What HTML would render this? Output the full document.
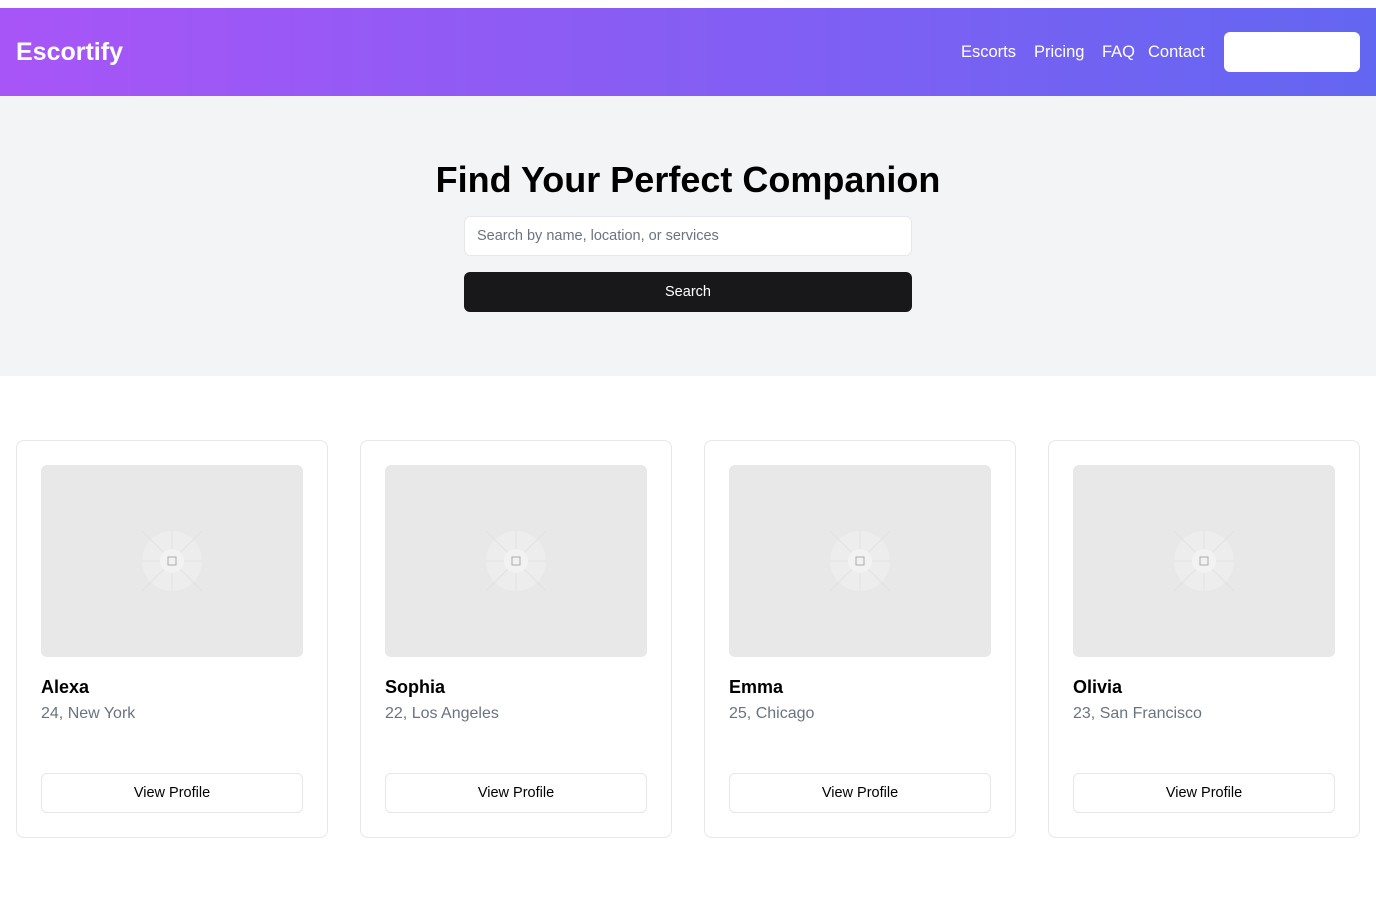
<!DOCTYPE html><html><head><style>
*{box-sizing:border-box;margin:0;padding:0}
body{width:1376px;height:910px;background:#fff;font-family:"Liberation Sans",sans-serif;position:relative;overflow:hidden}
.hdr{position:absolute;top:8px;left:0;width:1376px;height:88px;background:linear-gradient(90deg,#a855f7,#6366f1);}
.logo{position:absolute;left:16px;top:30px;color:#fff;font-weight:bold;font-size:25px}
.nav{position:absolute;top:35px;color:#fff;font-size:16.5px}
.nbtn{position:absolute;left:1224px;top:24px;width:136px;height:40px;background:#fff;border-radius:6px}
.hero{position:absolute;top:96px;left:0;width:1376px;height:280px;background:#f3f4f6}
h1{position:absolute;top:159px;width:100%;text-align:center;font-size:36px;font-weight:bold;color:#000}
.inp{position:absolute;left:464px;top:216px;width:448px;height:40px;background:#fff;border:1px solid #e5e7eb;border-radius:6px;font-size:14.5px;color:#6b7280;padding:11px 12px}
.sb{position:absolute;left:464px;top:272px;width:448px;height:40px;background:#18181b;border-radius:6px;color:#fff;font-size:14.5px;text-align:center;line-height:40px}
.card{position:absolute;top:440px;width:312px;height:398px;border:1px solid #e5e7eb;border-radius:8px;background:#fff}
.img{position:absolute;left:24px;top:24px;width:262px;height:192px;background:#e8e8e8;border-radius:6px}
.img svg{position:absolute;left:101px;top:66px}
.nm{position:absolute;left:24px;top:236px;font-weight:bold;font-size:18px;color:#000}
.loc{position:absolute;left:24px;top:264px;font-size:16px;color:#6b7280}
.vp{position:absolute;left:24px;top:332px;width:262px;height:40px;border:1px solid #e5e7eb;border-radius:6px;text-align:center;line-height:38px;font-size:14.5px;color:#000}
</style></head><body>
<div class="hdr"><div class="logo">Escortify</div>
<span class="nav" style="left:961px">Escorts</span><span class="nav" style="left:1034px">Pricing</span><span class="nav" style="left:1102px">FAQ</span><span class="nav" style="left:1148px">Contact</span>
<div class="nbtn"></div></div>
<div class="hero"></div>
<h1>Find Your Perfect Companion</h1>
<div class="inp">Search by name, location, or services</div>
<div class="sb">Search</div>
<div class="card" style="left:16px"><div class="img"><svg width="60" height="60"><circle cx="30" cy="30" r="30" fill="#ededed"/><g stroke="#e2e2e2"><line x1="30" y1="0" x2="30" y2="60"/><line x1="0" y1="30" x2="60" y2="30"/><line x1="0" y1="0" x2="60" y2="60"/><line x1="60" y1="0" x2="0" y2="60"/></g><circle cx="30" cy="30" r="12" fill="#f2f2f2"/><rect x="26" y="26" width="8" height="8" fill="none" stroke="#aaa"/></svg></div><div class="nm">Alexa</div><div class="loc">24, New York</div><div class="vp">View Profile</div></div>
<div class="card" style="left:360px"><div class="img"><svg width="60" height="60"><circle cx="30" cy="30" r="30" fill="#ededed"/><g stroke="#e2e2e2"><line x1="30" y1="0" x2="30" y2="60"/><line x1="0" y1="30" x2="60" y2="30"/><line x1="0" y1="0" x2="60" y2="60"/><line x1="60" y1="0" x2="0" y2="60"/></g><circle cx="30" cy="30" r="12" fill="#f2f2f2"/><rect x="26" y="26" width="8" height="8" fill="none" stroke="#aaa"/></svg></div><div class="nm">Sophia</div><div class="loc">22, Los Angeles</div><div class="vp">View Profile</div></div>
<div class="card" style="left:704px"><div class="img"><svg width="60" height="60"><circle cx="30" cy="30" r="30" fill="#ededed"/><g stroke="#e2e2e2"><line x1="30" y1="0" x2="30" y2="60"/><line x1="0" y1="30" x2="60" y2="30"/><line x1="0" y1="0" x2="60" y2="60"/><line x1="60" y1="0" x2="0" y2="60"/></g><circle cx="30" cy="30" r="12" fill="#f2f2f2"/><rect x="26" y="26" width="8" height="8" fill="none" stroke="#aaa"/></svg></div><div class="nm">Emma</div><div class="loc">25, Chicago</div><div class="vp">View Profile</div></div>
<div class="card" style="left:1048px"><div class="img"><svg width="60" height="60"><circle cx="30" cy="30" r="30" fill="#ededed"/><g stroke="#e2e2e2"><line x1="30" y1="0" x2="30" y2="60"/><line x1="0" y1="30" x2="60" y2="30"/><line x1="0" y1="0" x2="60" y2="60"/><line x1="60" y1="0" x2="0" y2="60"/></g><circle cx="30" cy="30" r="12" fill="#f2f2f2"/><rect x="26" y="26" width="8" height="8" fill="none" stroke="#aaa"/></svg></div><div class="nm">Olivia</div><div class="loc">23, San Francisco</div><div class="vp">View Profile</div></div>
</body></html>
